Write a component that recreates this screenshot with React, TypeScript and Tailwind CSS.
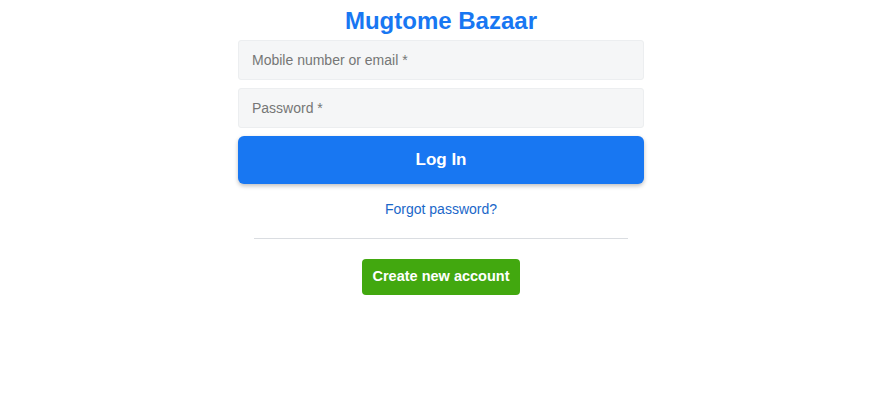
const App = () => {
  return (
    <div className="min-h-screen bg-white font-['Liberation_Sans',Arial,sans-serif]">
      <div className="mx-auto w-[406px] translate-x-[2px] pt-[5px] flex flex-col">
        <h1 className="text-center text-[24px] leading-8 font-bold text-[#1877f2] mb-[3px]">
          Mugtome Bazaar
        </h1>
        <input
          className="h-10 w-full rounded-[3px] border border-[#eceef0] bg-[#f5f6f7] px-[13px] text-sm text-gray-700 placeholder:text-[#767676] outline-none"
          placeholder="Mobile number or email *"
        />
        <input
          type="password"
          className="mt-2 h-10 w-full rounded-[3px] border border-[#eceef0] bg-[#f5f6f7] px-[13px] text-sm text-gray-700 placeholder:text-[#767676] outline-none"
          placeholder="Password *"
        />
        <button className="mt-2 h-12 w-full rounded-md bg-[#1877f2] text-[17px] font-bold text-white shadow-[0_2px_4px_rgba(0,0,0,0.25)]">
          Log In
        </button>
        <a className="mt-[17px] text-center text-sm leading-4 text-[#1a67c9]">Forgot password?</a>
        <div className="mx-4 mt-[21px] border-t border-[#dadde1]" />
        <div className="mt-5 flex justify-center">
          <button className="h-9 w-[158px] rounded-[4px] bg-[#42a80f] text-[14.5px] font-bold text-white">
            Create new account
          </button>
        </div>
      </div>
    </div>
  );
};

export default App;
